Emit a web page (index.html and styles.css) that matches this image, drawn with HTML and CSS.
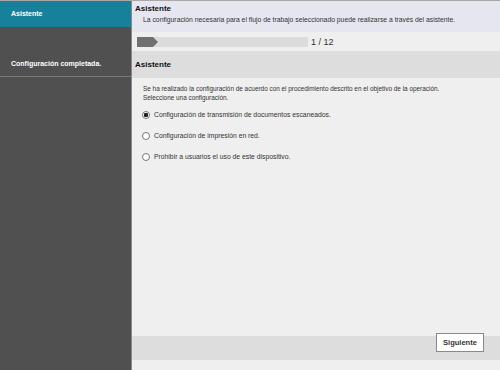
FILE: index.html
```html
<!DOCTYPE html>
<html lang="es">
<head>
    <meta charset="UTF-8">
    <title>Asistente</title>
    <link rel="stylesheet" href="styles.css">
</head>
<body>
    <div class="sidebar">
        <div class="nav-item active">Asistente</div>
        <div class="nav-item done">Configuración completada.</div>
    </div>
    <div class="main">
        <div class="top-info">
            <div class="top-title">Asistente</div>
            <div class="top-desc">La configuración necesaria para el flujo de trabajo seleccionado puede realizarse a través del asistente.</div>
        </div>
        <div class="progress-row">
            <div class="progress-track">
                <svg class="progress-arrow" width="22" height="10" viewBox="0 0 22 10">
                    <polygon points="0,0 16,0 21,5 16,10 0,10" fill="#707070"/>
                </svg>
            </div>
            <span class="progress-count">1 / 12</span>
        </div>
        <div class="section-head">Asistente</div>
        <div class="content">
            <p class="intro">Se ha realizado la configuración de acuerdo con el procedimiento descrito en el objetivo de la operación.<br>Seleccione una configuración.</p>
            <label class="option"><input type="radio" name="cfg" checked> Configuración de transmisión de documentos escaneados.</label>
            <label class="option"><input type="radio" name="cfg"> Configuración de impresión en red.</label>
            <label class="option"><input type="radio" name="cfg"> Prohibir a usuarios el uso de este dispositivo.</label>
        </div>
        <div class="footer">
            <button class="next-btn">Siguiente</button>
        </div>
        <div class="bottom-gap"></div>
    </div>
</body>
</html>
```

FILE: styles.css
```css
html, body {
    margin: 0;
    height: 100%;
}
body {
    display: flex;
    font-family: "Liberation Sans", Arial, sans-serif;
    font-size: 7px;
    color: #222;
    background-color: #efefef;
    border-top: 1px solid #a8a8a8;
    box-sizing: border-box;
}
.sidebar {
    width: 131px;
    flex-shrink: 0;
    background-color: #505050;
    border-right: 1px solid #8a8a8a;
    color: #fff;
    font-size: 7px;
}
.nav-item {
    font-weight: bold;
    padding-left: 11px;
}
.nav-item.active {
    height: 26px;
    line-height: 26px;
    background-color: #17809a;
}
.nav-item.done {
    height: 50px;
    line-height: 74px;
    border-bottom: 1px solid #7a7a7a;
    box-sizing: border-box;
}
.main {
    flex: 1;
    display: flex;
    flex-direction: column;
}
.top-info {
    background-color: #e6e6f0;
    height: 31px;
    padding: 3px 0 0 3px;
    box-sizing: border-box;
}
.top-title {
    font-weight: bold;
    font-size: 8px;
    color: #111;
}
.top-desc {
    padding-left: 8px;
    margin-top: 3px;
    font-size: 6.8px;
    color: #333;
}
.progress-row {
    height: 19px;
    display: flex;
    align-items: center;
    padding-left: 5px;
}
.progress-track {
    width: 171px;
    height: 10px;
    background-color: #dcdcdc;
    display: flex;
}
.progress-count {
    margin-left: 3px;
    font-size: 9px;
    color: #333;
}
.section-head {
    height: 27px;
    line-height: 27px;
    background-color: #dddddd;
    font-weight: bold;
    font-size: 8px;
    padding-left: 3px;
    color: #111;
}
.content {
    flex: 1;
    padding: 6px 0 0 10px;
    display: flex;
    flex-direction: column;
    color: #333;
}
.intro {
    margin: 0 0 2px 1px;
    line-height: 9px;
    font-size: 6.4px;
}
.option {
    display: flex;
    align-items: center;
    height: 21px;
    font-size: 6.8px;
}
.option input {
    appearance: none;
    width: 8px;
    height: 8px;
    margin: 0 4px 0 0;
    border: 1px solid #777;
    border-radius: 50%;
    background-color: #fff;
    box-sizing: border-box;
}
.option input:checked {
    background: radial-gradient(circle, #222 0 2px, #fff 2.5px);
}
.footer {
    height: 24px;
    background-color: #dddddd;
    display: flex;
    justify-content: flex-end;
    align-items: flex-start;
    padding-right: 16px;
}
.next-btn {
    width: 48px;
    height: 19px;
    margin-top: -3px;
    background-color: #fff;
    border: 1px solid #8a8a8a;
    font-family: inherit;
    font-size: 7.5px;
    font-weight: bold;
    color: #333;
    padding: 0;
}
.bottom-gap {
    height: 10px;
}
```
